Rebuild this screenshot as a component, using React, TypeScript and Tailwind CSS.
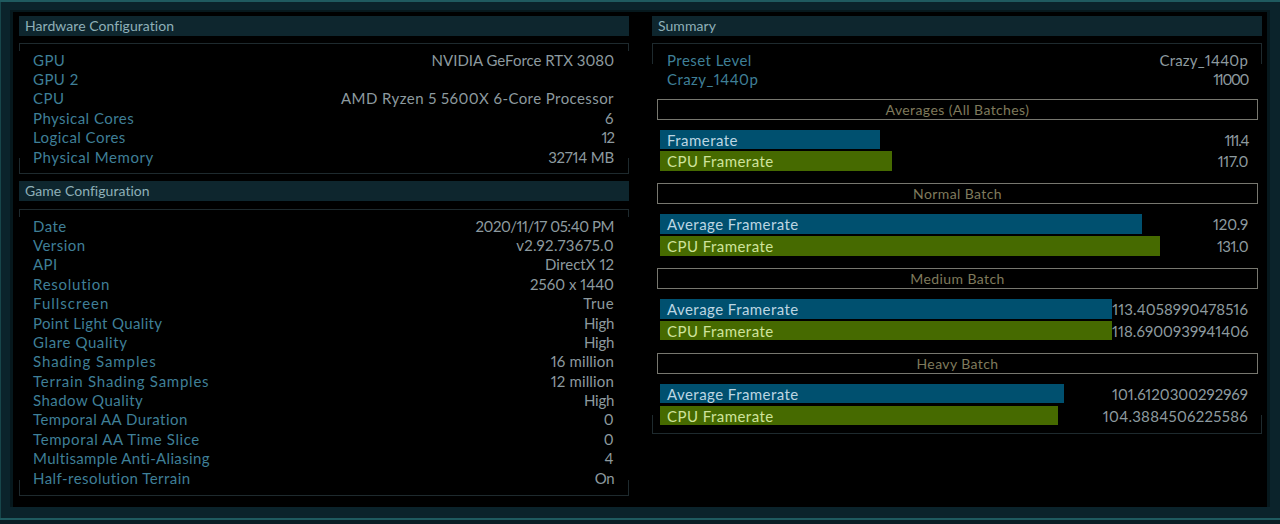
const hardware = [
  { label: 'GPU', value: 'NVIDIA GeForce RTX 3080', vt: 'tracking-[0px]' },
  { label: 'GPU 2', value: '' },
  { label: 'CPU', value: 'AMD Ryzen 5 5600X 6-Core Processor', vt: 'tracking-[0.42px]' },
  { label: 'Physical Cores', value: '6' },
  { label: 'Logical Cores', value: '12', vt: 'tracking-[-1px]' },
  { label: 'Physical Memory', value: '32714 MB', vt: 'tracking-[-0.2px]', lt: 'tracking-[0.55px]' },
];

const game = [
  { label: 'Date', value: '2020/11/17 05:40 PM', vt: 'tracking-[-0.45px]' },
  { label: 'Version', value: 'v2.92.73675.0', vt: 'tracking-[0.3px]' },
  { label: 'API', value: 'DirectX 12', vt: 'tracking-[0.05px]' },
  { label: 'Resolution', value: '2560 x 1440', vt: 'tracking-[0px]', lt: 'tracking-[0.75px]' },
  { label: 'Fullscreen', value: 'True', lt: 'tracking-[1px]' },
  { label: 'Point Light Quality', value: 'High', vt: 'tracking-[-0.3px]', lt: 'tracking-[0.35px]' },
  { label: 'Glare Quality', value: 'High', vt: 'tracking-[-0.3px]', lt: 'tracking-[0.6px]' },
  { label: 'Shading Samples', value: '16 million', vt: 'tracking-[0.15px]', lt: 'tracking-[0.9px]' },
  { label: 'Terrain Shading Samples', value: '12 million', vt: 'tracking-[0.15px]', lt: 'tracking-[0.75px]' },
  { label: 'Shadow Quality', value: 'High', vt: 'tracking-[-0.3px]' },
  { label: 'Temporal AA Duration', value: '0' },
  { label: 'Temporal AA Time Slice', value: '0', lt: 'tracking-[0.6px]' },
  { label: 'Multisample Anti-Aliasing', value: '4', lt: 'tracking-[0.35px]' },
  { label: 'Half-resolution Terrain', value: 'On', vt: 'tracking-[-0.55px]' },
];

const batches = [
  {
    title: 'Averages (All Batches)',
    rows: [
      { label: 'Framerate', value: '111.4', width: 220, vt: 'tracking-[-1.35px]' },
      { label: 'CPU Framerate', value: '117.0', width: 232, vt: 'tracking-[-0.35px]' },
    ],
  },
  {
    title: 'Normal Batch',
    rows: [
      { label: 'Average Framerate', value: '120.9', width: 482, vt: 'tracking-[-0.15px]' },
      { label: 'CPU Framerate', value: '131.0', width: 500, vt: 'tracking-[-0.55px]' },
    ],
  },
  {
    title: 'Medium Batch',
    rows: [
      { label: 'Average Framerate', value: '113.4058990478516', width: 452, vt: 'tracking-[0.1px]' },
      { label: 'CPU Framerate', value: '118.6900939941406', width: 452, vt: 'tracking-[0.05px]' },
    ],
  },
  {
    title: 'Heavy Batch',
    rows: [
      { label: 'Average Framerate', value: '101.6120300292969', width: 404, vt: 'tracking-[0px]' },
      { label: 'CPU Framerate', value: '104.3884506225586', width: 398, vt: 'tracking-[0.27px]' },
    ],
  },
];

function SectionTitle({ children }: { children: string }) {
  return (
    <div className="h-[20px] bg-[#0e262e] pl-[6px] text-[14px] leading-[20px] tracking-[0.05px] text-[#8fb0b8]">
      {children}
    </div>
  );
}

// top and bottom rules with short ticks at the four corners
function Bracket({
  className,
  topTick,
  bottomTick,
  children,
}: {
  className: string;
  topTick: string;
  bottomTick: string;
  children: React.ReactNode;
}) {
  return (
    <div className={`relative border-y border-[#1e2a2e] ${className}`}>
      <div className={`absolute left-0 top-0 w-px bg-[#1e2a2e] ${topTick}`} />
      <div className={`absolute right-0 top-0 w-px bg-[#1e2a2e] ${topTick}`} />
      <div className={`absolute bottom-0 left-0 w-px bg-[#1e2a2e] ${bottomTick}`} />
      <div className={`absolute bottom-0 right-0 w-px bg-[#1e2a2e] ${bottomTick}`} />
      {children}
    </div>
  );
}

function InfoRow({ label, value, lt, vt }: { label: string; value: string; lt?: string; vt?: string }) {
  return (
    <div className="flex h-[19.4px] items-center justify-between text-[15px] proportional-nums">
      <span className={`text-[#3f7f97] ${lt ?? 'tracking-[0.45px]'}`}>{label}</span>
      <span className={`text-[#8d9a9f] ${vt ?? 'tracking-[0.45px]'}`}>{value}</span>
    </div>
  );
}

function Batch({ title, rows }: (typeof batches)[number]) {
  return (
    <div>
      <div className="ml-[5px] mr-[4px] flex h-[21px] items-center justify-center border border-[#77776f] text-[14px] tracking-[0.4px] text-[#7f7a5c]">
        {title}
      </div>
      <div className="mt-[10px] flex flex-col gap-[2.2px] pl-[8px] pr-[14px]">
        {rows.map((row) => (
          <div key={row.label} className="flex h-[19.5px] items-center justify-between">
            <div
              className={`h-full shrink-0 pl-[7px] text-[15px] leading-[21px] tracking-[0.45px] ${
                row.label === 'CPU Framerate' ? 'bg-[#466a00] text-[#cfe39c]' : 'bg-[#00506f] text-[#bcd6e2]'
              }`}
              style={{ width: row.width }}
            >
              {row.label}
            </div>
            <span className={`whitespace-nowrap pt-px text-[15px] text-[#8d9a9f] proportional-nums ${row.vt}`}>
              {row.value}
            </span>
          </div>
        ))}
      </div>
    </div>
  );
}

export default function App() {
  return (
    <div className="h-[524px] w-[1280px] overflow-hidden bg-[#0a1d24] font-['Lato',sans-serif]">
      <div className="h-[2px] bg-[#1f5a5f]" />
      <div className="flex h-[518px] flex-col bg-[#0b232b]">
        <div className="flex flex-1 flex-col border-l border-[#17454a] pb-[11px] pl-[9px] pr-[10px] pt-[8px]">
          <div className="flex flex-1 gap-[23px] border-x-[3px] border-t-2 border-[#06181d] bg-black pl-[6px] pr-[5px] pt-[4px]">
            <div className="w-[610px]">
              <SectionTitle>Hardware Configuration</SectionTitle>
              <Bracket
                className="mt-[7px] h-[131px] pl-[14px] pr-[15px] pt-[6.1px]"
                topTick="h-[7px]"
                bottomTick="h-[15px]"
              >
                {hardware.map((row) => (
                  <InfoRow key={row.label} {...row} />
                ))}
              </Bracket>
              <div className="mt-[7px]">
                <SectionTitle>Game Configuration</SectionTitle>
              </div>
              <Bracket
                className="mt-[8px] h-[287px] pl-[14px] pr-[15px] pt-[6.1px]"
                topTick="h-[7px]"
                bottomTick="h-[15px]"
              >
                {game.map((row) => (
                  <InfoRow key={row.label} {...row} />
                ))}
              </Bracket>
            </div>
            <div className="w-[610px]">
              <SectionTitle>Summary</SectionTitle>
              <Bracket className="mt-[7px] h-[391px] pt-[6.1px]" topTick="h-[20px]" bottomTick="h-[18px]">
                <div className="pl-[15px] pr-[14px]">
                  <InfoRow label="Preset Level" value="Crazy_1440p" vt="tracking-[0.2px]" />
                  <InfoRow label="Crazy_1440p" value="11000" vt="tracking-[-1.35px]" />
                </div>
                <div className="mt-[9.9px] flex flex-col gap-[12.5px]">
                  {batches.map((batch) => (
                    <Batch key={batch.title} {...batch} />
                  ))}
                </div>
              </Bracket>
            </div>
          </div>
        </div>
        <div className="h-[2px] bg-[#1f5a5f]" />
      </div>
    </div>
  );
}
